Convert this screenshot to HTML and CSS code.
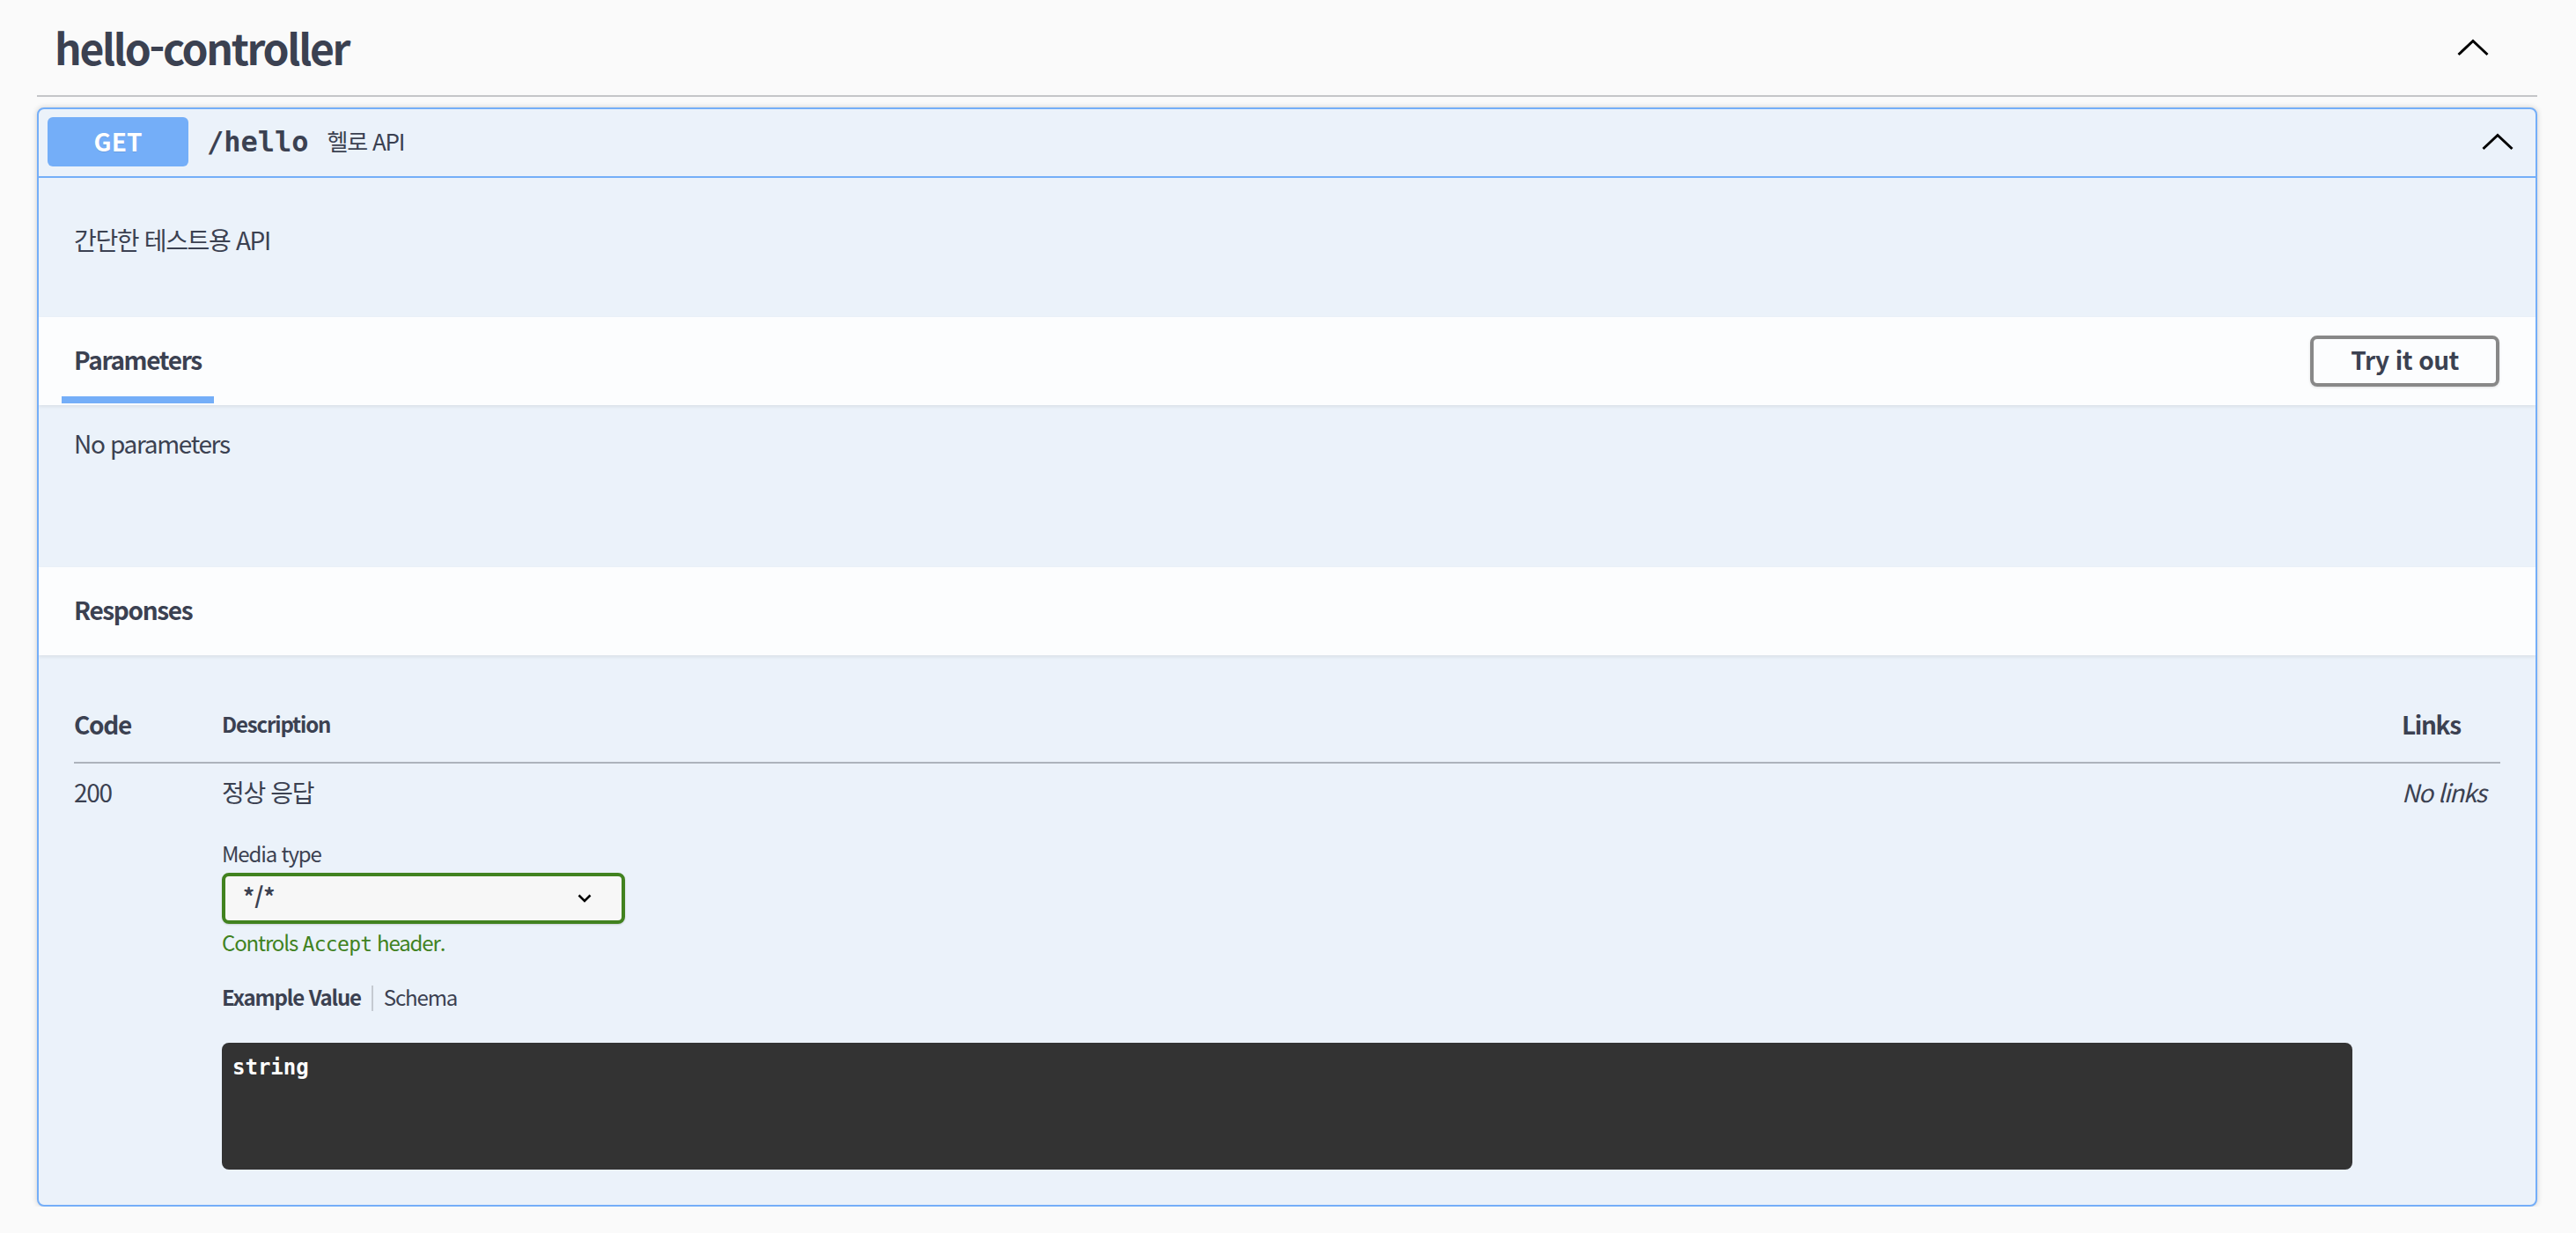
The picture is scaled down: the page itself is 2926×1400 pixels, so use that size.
FILE: index.html
```html
<!DOCTYPE html>
<html lang="ko">
<head>
<meta charset="utf-8">
<title>hello-controller</title>
<link rel="stylesheet" href="styles.css">
</head>
<body>
<div class="page">
  <div class="tag">
    <h3 class="tag-title">hello-controller</h3>
    <svg class="arrow" width="36" height="20" viewBox="0 0 36 20"><polyline points="1.5,18 18,2.5 34.5,18" fill="none" stroke="#000" stroke-width="3"/></svg>
  </div>
  <div class="opblock">
    <div class="summary">
      <span class="method">GET</span>
      <span class="path">/hello</span>
      <span class="summary-desc">헬로 API</span>
      <svg class="arrow summary-arrow" width="36" height="20" viewBox="0 0 36 20"><polyline points="1.5,18 18,2.5 34.5,18" fill="none" stroke="#000" stroke-width="3"/></svg>
    </div>
    <div class="description">간단한 테스트용 API</div>
    <div class="section-header">
      <div class="tab">Parameters</div>
      <button class="try-out">Try it out</button>
    </div>
    <div class="params">No parameters</div>
    <div class="section-header responses-header">
      <h4 class="section-title">Responses</h4>
    </div>
    <div class="responses-inner">
      <table class="responses-table">
        <thead>
          <tr>
            <td class="col-code head-lg">Code</td>
            <td class="col-desc head-sm">Description</td>
            <td class="col-links head-lg">Links</td>
          </tr>
        </thead>
        <tbody>
          <tr>
            <td class="col-code cell">200</td>
            <td class="col-desc cell">
              <p class="resp-desc">정상 응답</p>
              <div class="media-label">Media type</div>
              <div class="media-select">
                <span class="media-value">*/*</span>
                <svg width="16" height="10" viewBox="0 0 16 10"><polyline points="1.5,1.5 8,8 14.5,1.5" fill="none" stroke="#000" stroke-width="2.6"/></svg>
              </div>
              <div class="media-hint">Controls <code class="hint-code">Accept</code> header.</div>
              <div class="example-tabs">
                <span class="ex-tab active">Example Value</span>
                <span class="ex-divider"></span>
                <span class="ex-tab">Schema</span>
              </div>
              <pre class="code-block">string</pre>
            </td>
            <td class="col-links cell"><i class="no-links">No links</i></td>
          </tr>
        </tbody>
      </table>
    </div>
  </div>
</div>
</body>
</html>
```
FILE: styles.css
```css
* { box-sizing: border-box; letter-spacing: -0.048em; }
html, body { margin: 0; padding: 0; }
body {
  background: #fafafa;
  font-family: "Noto Sans CJK KR", "Noto Sans", sans-serif;
  color: #3b4151;
}
.page {
  padding: 0 44px 0 42px;
}
.tag {
  display: flex;
  align-items: center;
  height: 110px;
  padding: 0 55px 0 20px;
  border-bottom: 2px solid #c4c5c8;
}
.tag-title {
  margin: 0 0 2px;
  font-size: 48px;
  font-weight: 600;
  line-height: 60px;
  color: #3b4151;
}
.arrow { display: block; margin-left: auto; }

.opblock {
  margin-top: 12px;
  border: 2px solid #74aef8;
  border-radius: 8px;
  background: #ebf2fa;
  box-shadow: 0 0 6px rgba(0,0,0,.19);
  overflow: hidden;
}
.summary {
  display: flex;
  align-items: center;
  height: 78px;
  padding: 0 25px 2px 10px;
  border-bottom: 2px solid #74aef8;
}
.method {
  width: 160px;
  height: 56px;
  border-radius: 6px;
  background: #74aef8;
  color: #fff;
  font-size: 28px;
  font-weight: 700;
  letter-spacing: 0;
  display: flex;
  align-items: center;
  justify-content: center;
  padding-bottom: 3px;
  text-shadow: 0 1px 0 rgba(0,0,0,.1);
}
.path {
  margin-left: 21px;
  font-family: "DejaVu Sans Mono", monospace;
  font-weight: 700;
  font-size: 32px;
  letter-spacing: 0;
  color: #3b4151;
}
.summary-desc {
  margin-left: 21px;
  font-size: 26px;
  margin-bottom: 3px;
  color: #3b4151;
}
.description {
  height: 158px;
  padding: 50px 40px 0;
  font-size: 28px;
  line-height: 40px;
}
.section-header {
  display: flex;
  align-items: center;
  height: 100px;
  background: rgba(255,255,255,.82);
  box-shadow: 0 2px 4px rgba(0,0,0,.08);
  position: relative;
}
.tab {
  margin: 0 0 2px 26px;
  padding: 28px 14px 22px;
  border-bottom: 8px solid #74aef8;
  font-size: 28px;
  font-weight: 700;
  line-height: 40px;
}
.try-out {
  margin-left: auto;
  margin-right: 41px;
  width: 215px;
  height: 58px;
  border: 4px solid #888;
  border-radius: 8px;
  background: transparent;
  font-family: "Noto Sans CJK KR", "Noto Sans", sans-serif;
  font-size: 28px;
  font-weight: 700;
  letter-spacing: -0.02em;
  color: #3b4151;
  box-shadow: 0 1px 3px rgba(0,0,0,.12);
  padding: 0 0 4px;
}
.params {
  height: 184px;
  padding: 23px 40px 0;
  font-size: 28px;
  line-height: 40px;
}
.responses-header { padding-left: 40px; }
.section-title {
  margin: 0 0 4px;
  font-size: 28px;
  font-weight: 700;
  line-height: 40px;
}
.responses-inner {
  padding: 40px;
}
.responses-table {
  width: 100%;
  border-collapse: collapse;
}
.responses-table td { padding: 0; vertical-align: top; text-align: left; }
.col-code { width: 168px; }
.col-links { width: 112px; }
thead td {
  padding: 18px 0 23px !important;
  line-height: 40px;
  border-bottom: 2px solid #adb3bc;
  font-weight: 700;
}
.head-lg { font-size: 28px; }
.head-sm { font-size: 24px; vertical-align: middle !important; }
.cell {
  padding-top: 12px !important;
  font-size: 28px;
  line-height: 40px;
}
.resp-desc { margin: 0; font-size: 28px; line-height: 40px; }
.media-label {
  margin-top: 34px;
  font-size: 24px;
  line-height: 32px;
}
.media-select {
  margin-top: 6px;
  width: 458px;
  height: 58px;
  border: 4px solid #41821f;
  border-radius: 8px;
  background: #f7f7f7;
  display: flex;
  align-items: center;
  padding: 0 34px 0 20px;
  box-shadow: 0 1px 2px rgba(0,0,0,.15);
}
.media-value {
  font-size: 26px;
  font-weight: 700;
  line-height: 40px;
  letter-spacing: 0;
  margin-top: -6px;
}
.media-select svg { margin-left: auto; }
.media-hint {
  margin-top: 5px;
  font-size: 24px;
  line-height: 32px;
  color: #41821f;
}
.hint-code {
  font-family: "DejaVu Sans Mono", monospace;
  font-size: 23px;
  letter-spacing: -0.03em;
}
.example-tabs {
  margin-top: 27px;
  display: flex;
  align-items: center;
  height: 36px;
  font-size: 24px;
}
.ex-tab { line-height: 36px; margin-top: -3px; }
.ex-tab.active { font-weight: 700; }
.ex-divider {
  width: 2px;
  height: 29px;
  background: #c5cad1;
  margin: 0 12px 0 12px;
}
.code-block {
  margin: 33px 0 0;
  width: calc(100% - 56px);
  height: 144px;
  background: #333;
  border-radius: 8px;
  padding: 12px 12px;
  color: #fff;
  font-family: "DejaVu Sans Mono", monospace;
  font-weight: 700;
  font-size: 24px;
  line-height: 32px;
  letter-spacing: 0;
}
.no-links { font-style: italic; }
```
